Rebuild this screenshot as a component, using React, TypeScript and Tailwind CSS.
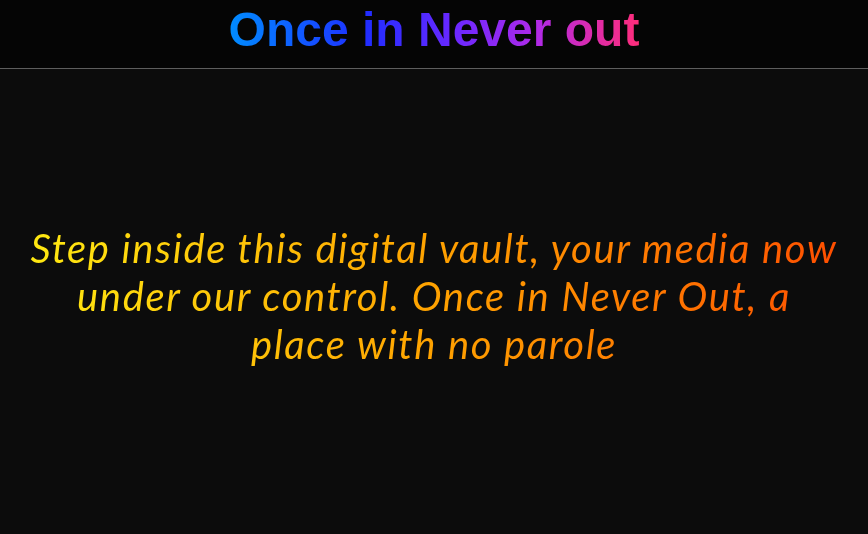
import React from "react";

const App: React.FC = () => {
  return (
    <div className="flex h-screen flex-col bg-[#0c0c0c]">
      <header className="flex h-[69px] shrink-0 justify-center border-b border-[#5e5e5e] bg-[#050505] pt-[2px]">
        <h1
          className="inline-block bg-[linear-gradient(to_right,#008cff_0%,#1f2dff_33%,#6a28ff_55%,#b02ae8_75%,#ff2d7a_100%)] bg-clip-text text-[48px] font-bold leading-[1.15] text-transparent"
          style={{ fontFamily: '"Liberation Sans", Arial, sans-serif' }}
        >
          Once in Never out
        </h1>
      </header>
      <main className="flex flex-1 items-center justify-center px-4 pb-3">
        <p
          className="w-full bg-gradient-to-r from-[#ffeb12] via-[#ffa200] to-[#ff4a00] bg-clip-text text-center text-[40px] italic leading-[48px] tracking-[0.04em] text-transparent"
          style={{ fontFamily: "Lato, sans-serif" }}
        >
          Step inside this digital vault, your media now
          <br />
          under our control. Once in Never Out, a
          <br />
          place with no parole
        </p>
      </main>
    </div>
  );
};

export default App;
